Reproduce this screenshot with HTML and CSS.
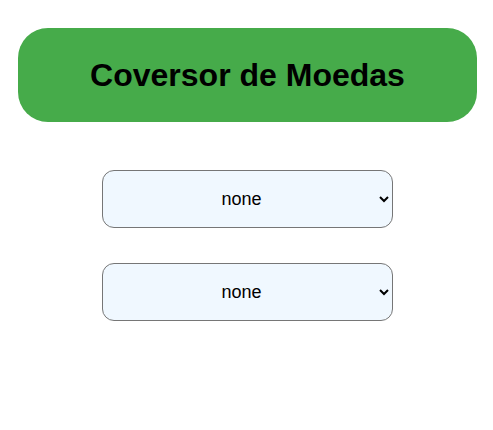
FILE: index.html
```html
<!DOCTYPE html>
<html lang="pt">
<head>
<meta charset="utf-8">
<title>Coversor de Moedas</title>
<link rel="stylesheet" href="styles.css">
</head>
<body>
<div class="app">
  <h1 class="title">Coversor de Moedas</h1>
  <div class="selects">
    <select class="currency"><option>none</option></select>
    <select class="currency"><option>none</option></select>
  </div>
</div>
</body>
</html>
```
FILE: styles.css
```css
html, body {
  margin: 0;
  padding: 0;
  background: #ffffff;
}
body {
  font-family: "Liberation Sans", Arial, sans-serif;
}
.app {
  padding: 28px 16px 0 18px;
  display: flex;
  flex-direction: column;
  align-items: center;
}
.title {
  box-sizing: border-box;
  width: 100%;
  height: 94px;
  margin: 0;
  background: #46ab4a;
  border-radius: 30px;
  color: #000;
  font-size: 32px;
  font-weight: bold;
  display: flex;
  align-items: center;
  justify-content: center;
}
.selects {
  margin-top: 48px;
  display: flex;
  flex-direction: column;
  gap: 35px;
}
.currency {
  width: 291px;
  height: 58px;
  background: #f0f8ff;
  border: 1px solid #767676;
  border-radius: 12px;
  font-family: "Liberation Sans", Arial, sans-serif;
  font-size: 18px;
  color: #000;
  text-align: center;
  text-align-last: center;
  padding: 0 4px;
}
```
